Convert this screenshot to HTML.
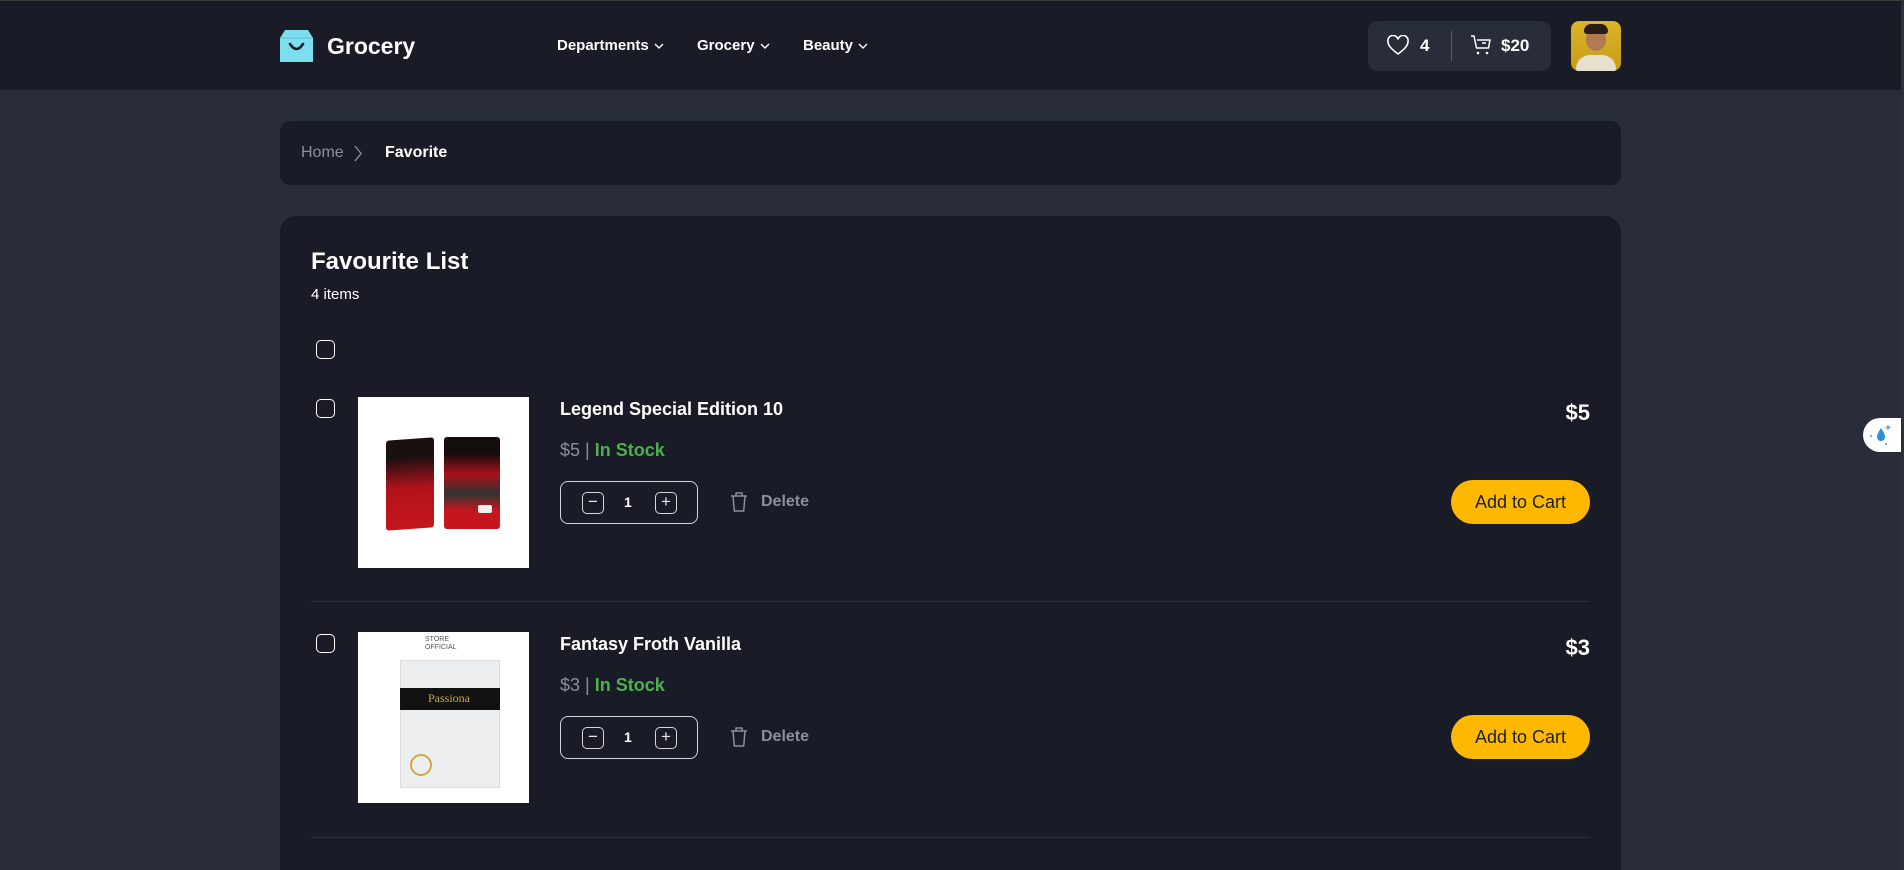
<!DOCTYPE html>
<html style="width:1904px;height:870px;overflow:hidden"><head><meta charset="utf-8"><style>
*{box-sizing:border-box;margin:0;padding:0}
html,body{width:1904px;height:870px;overflow:hidden}
body{background:#292d39;font-family:"Liberation Sans",sans-serif;color:#fff;position:relative}
.abs{position:absolute}
.hdr{left:0;top:0;width:1904px;height:90px;background:#191c27;border-top:1px solid #3a3d40}
.strip{right:0;top:0;width:3px;height:870px;background:#2e3034}
.nav{font-size:15px;font-weight:bold;top:37px}
.nav svg{margin-left:5px;vertical-align:middle}
.panel{background:#191c27}
.cb{width:19px;height:19px;border:1.6px solid #fff;border-radius:5px}
.img{background:#fff;width:171px;height:171px;overflow:hidden}
.title{font-size:18px;font-weight:bold}
.price{font-size:18px;color:#8a8f9c}
.price b{color:#4caf50;font-weight:bold}
.qty{width:138px;height:43px;border:1px solid #d0d2d8;border-radius:8px}
.qb{width:22px;height:22px;border:1.5px solid #d6d8dc;border-radius:5px;top:10px;font-size:17px;line-height:18px;text-align:center;color:#e8e8e8}
.del{font-size:16px;color:#8a8f9c;font-weight:bold}
.rp{font-size:22px;font-weight:bold;text-align:right;width:100px}
.btn{width:139px;height:44px;border-radius:22px;background:#ffb800;color:#1b1e2b;font-size:18px;text-align:center;line-height:44px}
.hr{height:1px;background:#2c303c;left:311px;width:1279px}
</style></head><body>
<div class="abs hdr"></div>
<div class="abs strip"></div>
<svg class="abs" style="left:280px;top:30px" width="33" height="32" viewBox="0 0 33 32"><path d="M0 8 L5 0 H28 L33 8 V32 H0Z" fill="#7ddfee"/><path d="M0 8 H33" stroke="#5cc6d8" stroke-width="1"/><path d="M10 14 Q16.5 24 23 14" stroke="#1a1d28" stroke-width="2.6" fill="none" stroke-linecap="round"/></svg>
<div class="abs" style="left:327px;top:33px;font-size:23px;font-weight:bold">Grocery</div>
<div class="abs nav" style="left:557px">Departments<svg width="10" height="6"><path d="M1 1l4 4 4-4" stroke="#fff" stroke-width="1.4" fill="none"/></svg></div>
<div class="abs nav" style="left:697px">Grocery<svg width="10" height="6"><path d="M1 1l4 4 4-4" stroke="#fff" stroke-width="1.4" fill="none"/></svg></div>
<div class="abs nav" style="left:803px">Beauty<svg width="10" height="6"><path d="M1 1l4 4 4-4" stroke="#fff" stroke-width="1.4" fill="none"/></svg></div>
<div class="abs" style="left:1368px;top:21px;width:183px;height:50px;background:#292d39;border-radius:10px"></div>
<svg class="abs" style="left:1387px;top:35px" width="22" height="21" viewBox="0 0 22 21"><path d="M11 19 C3 13 1 10 1 6.5 A5 5 0 0 1 11 4.5 A5 5 0 0 1 21 6.5 C21 10 19 13 11 19Z" stroke="#fff" stroke-width="1.6" fill="none"/></svg>
<div class="abs" style="left:1420px;top:36px;font-size:17px;font-weight:bold">4</div>
<div class="abs" style="left:1451px;top:31px;width:1px;height:30px;background:#555a66"></div>
<svg class="abs" style="left:1470px;top:34px" width="22" height="22" viewBox="0 0 22 22"><path d="M1 2h3l2.5 12h12L20 6H7" stroke="#fff" stroke-width="1.5" fill="none" stroke-linejoin="round"/><path d="M12 9h4" stroke="#fff" stroke-width="1.5"/><circle cx="8" cy="19" r="1.3" fill="#fff"/><circle cx="17" cy="19" r="1.3" fill="#fff"/></svg>
<div class="abs" style="left:1501px;top:36px;font-size:17px;font-weight:bold">$20</div>
<div class="abs" style="left:1571px;top:21px;width:50px;height:50px;border-radius:8px;background:linear-gradient(#d9b52a,#c79c14);overflow:hidden">
<div class="abs" style="left:15px;top:6px;width:20px;height:24px;border-radius:50%;background:#b07a55"></div>
<div class="abs" style="left:13px;top:3px;width:24px;height:10px;border-radius:10px 10px 4px 4px;background:#2a1d15"></div>
<div class="abs" style="left:5px;top:34px;width:40px;height:20px;border-radius:14px 14px 0 0;background:#e6e0cc"></div></div>
<div class="abs panel" style="left:280px;top:121px;width:1341px;height:64px;border-radius:10px"></div>
<div class="abs" style="left:301px;top:144px;font-size:16px;color:#8a8f9c">Home</div>
<svg class="abs" style="left:353px;top:145px" width="10" height="17"><path d="M2 1l6 7.5-6 7.5" stroke="#8a8f9c" stroke-width="1.4" fill="none"/></svg>
<div class="abs" style="left:385px;top:144px;font-size:16px;font-weight:bold">Favorite</div>
<div class="abs panel" style="left:280px;top:216px;width:1341px;height:680px;border-radius:16px"></div>
<div class="abs" style="left:311px;top:248px;font-size:24px;font-weight:bold">Favourite List</div>
<div class="abs" style="left:311px;top:286px;font-size:15px">4 items</div>
<div class="abs cb" style="left:316px;top:340px"></div>
<div class="abs cb" style="left:316px;top:399px"></div>
<div class="abs img" style="left:358px;top:397px">
<div class="abs" style="left:28px;top:42px;width:48px;height:90px;background:linear-gradient(#1a1010 20%,#b3121b 55%,#c4161c);border-radius:3px;transform:skewY(-4deg)"></div>
<div class="abs" style="left:86px;top:40px;width:56px;height:92px;background:linear-gradient(#150c0c 18%,#a81018 40%,#333 62%,#c4161c 80%);border-radius:3px"></div>
<div class="abs" style="left:120px;top:108px;width:14px;height:8px;background:#eee;border-radius:2px"></div></div>
<div class="abs title" style="left:560px;top:399px">Legend Special Edition 10</div>
<div class="abs price" style="left:560px;top:440px">$5 | <b>In Stock</b></div>
<div class="abs qty" style="left:560px;top:481px"><div class="abs qb" style="left:21px">−</div><div class="abs" style="left:63px;top:12px;font-size:14px;font-weight:bold">1</div><div class="abs qb" style="left:94px">+</div></div>
<svg class="abs" style="left:729px;top:491px" width="20" height="22" viewBox="0 0 20 22"><path d="M2 5h16M7 5V2h6v3M4 5l1.3 15h9.4L16 5" stroke="#8a8f9c" stroke-width="1.5" fill="none" stroke-linejoin="round"/></svg>
<div class="abs del" style="left:761px;top:493px">Delete</div>
<div class="abs rp" style="left:1490px;top:400px">$5</div>
<div class="abs btn" style="left:1451px;top:480px">Add to Cart</div>
<div class="abs hr" style="top:601px"></div>
<div class="abs cb" style="left:316px;top:634px"></div>
<div class="abs img" style="left:358px;top:632px">
<div class="abs" style="left:67px;top:4px;font-size:7px;color:#555;line-height:8px">STORE<br>OFFICIAL</div>
<div class="abs" style="left:42px;top:28px;width:100px;height:128px;background:#eceef0;border:1px solid #ddd"></div>
<div class="abs" style="left:42px;top:56px;width:100px;height:22px;background:#111"></div>
<div class="abs" style="left:70px;top:59px;font-size:12px;color:#d4a73a;font-family:'Liberation Serif',serif">Passiona</div>
<div class="abs" style="left:52px;top:122px;width:22px;height:22px;border:2px solid #d4a73a;border-radius:50%"></div></div>
<div class="abs title" style="left:560px;top:634px">Fantasy Froth Vanilla</div>
<div class="abs price" style="left:560px;top:675px">$3 | <b>In Stock</b></div>
<div class="abs qty" style="left:560px;top:716px"><div class="abs qb" style="left:21px">−</div><div class="abs" style="left:63px;top:12px;font-size:14px;font-weight:bold">1</div><div class="abs qb" style="left:94px">+</div></div>
<svg class="abs" style="left:729px;top:726px" width="20" height="22" viewBox="0 0 20 22"><path d="M2 5h16M7 5V2h6v3M4 5l1.3 15h9.4L16 5" stroke="#8a8f9c" stroke-width="1.5" fill="none" stroke-linejoin="round"/></svg>
<div class="abs del" style="left:761px;top:728px">Delete</div>
<div class="abs rp" style="left:1490px;top:635px">$3</div>
<div class="abs btn" style="left:1451px;top:715px">Add to Cart</div>
<div class="abs hr" style="top:837px"></div>
<div class="abs" style="left:1863px;top:418px;width:38px;height:34px;background:#fff;border-radius:17px 0 0 17px"></div>
<svg class="abs" style="left:1866px;top:422px" width="30" height="26" viewBox="0 0 30 26"><path d="M15 6 C12 11 11 13 11 15 a4 4 0 0 0 8 0 C19 13 18 11 15 6Z" fill="#2b8fe0"/><path d="M22 3v5M19.5 5.5h5" stroke="#3aa0f0" stroke-width="1.3"/><circle cx="5" cy="14" r="1" fill="#3aa0f0"/><circle cx="20" cy="22" r="1" fill="#3aa0f0"/></svg>
</body></html>
